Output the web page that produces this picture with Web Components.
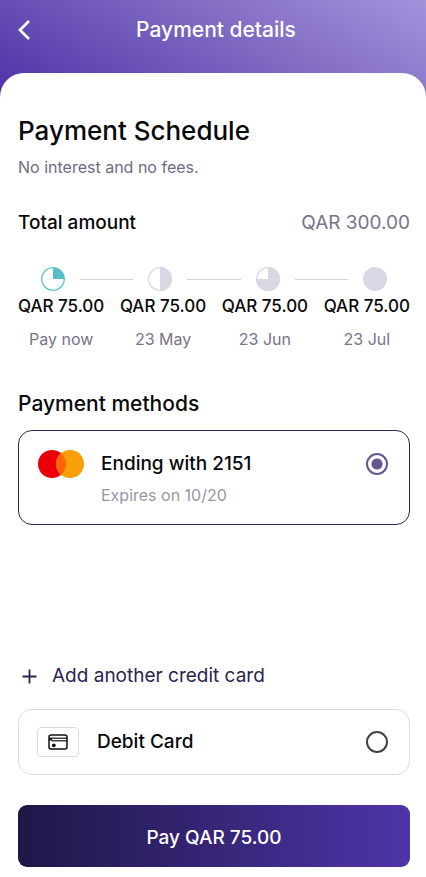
<!DOCTYPE html>
<html lang="en">
<head>
<meta charset="utf-8">
<meta name="viewport" content="width=device-width, initial-scale=1">
<title>Payment details</title>
<style>
  html { height: 100%; }
  body { margin: 0; min-height: 100%; display: flex; background: #fff; font-family: Inter, "Liberation Sans", sans-serif; font-weight: 400; color: #09090b; }
</style>
</head>
<body>
<payment-page></payment-page>

<template id="app-header">
  <style>
    :host { display: grid; grid-template-columns: 48px 1fr 42px; align-items: center; height: 59px; color: #fff; }
    button { display: flex; justify-content: center; align-items: center; height: 48px; padding: 0; border: 0; background: none; color: inherit; }
    h1 { margin: 0; text-align: center; font-size: 21px; line-height: 28px; font-weight: 500; }
  </style>
  <button type="button" aria-label="Back">
    <svg width="14" height="22" viewBox="0 0 14 22" fill="none" stroke="currentColor" stroke-width="2.7"><path d="M12 2 3 11 12 20"/></svg>
  </button>
  <h1><slot></slot></h1>
</template>

<template id="payment-schedule">
  <style>
    :host { display: block; }
    h2 { margin: 0; font-size: 26px; line-height: 32px; font-weight: 500; }
    p { margin: 0; }
    .note { margin-top: 8px; font-size: 16px; line-height: 24px; color: #6f6b83; }
    .total { display: flex; justify-content: space-between; align-items: center; margin-top: 30px; font-size: 19px; line-height: 28px; }
    .total span { font-weight: 500; }
    .total b { font-weight: 400; color: #77738a; }
    .track { display: flex; align-items: center; gap: 15px; margin: 30px 23px 0; }
    .track svg { flex: none; }
    .track i { flex: 1; height: 1px; background: #d3d2d8; }
    ol { display: flex; justify-content: space-between; list-style: none; margin: 0; padding: 3px 0 0; }
  </style>
  <h2>Payment Schedule</h2>
  <p class="note">No interest and no fees.</p>
  <p class="total"><span>Total amount</span><b>QAR 300.00</b></p>
  <div class="track" aria-hidden="true">
    <svg width="24" height="24" viewBox="0 0 24 24"><circle cx="12" cy="12" r="11.3" fill="none" stroke="#62c1ca" stroke-width="1.3"/><path d="M12 12V.7A11.3 11.3 0 0 1 23.3 12Z" fill="#55bdc7"/></svg>
    <i></i>
    <svg width="24" height="24" viewBox="0 0 24 24"><circle cx="12" cy="12" r="11.3" fill="none" stroke="#d9d7e4" stroke-width="1.3"/><path d="M12 0a12 12 0 0 1 0 24Z" fill="#d9d7e4"/></svg>
    <i></i>
    <svg width="24" height="24" viewBox="0 0 24 24"><circle cx="12" cy="12" r="11.3" fill="none" stroke="#d9d7e4" stroke-width="1.3"/><path d="M12 0a12 12 0 1 1-12 12H12Z" fill="#d9d7e4"/></svg>
    <i></i>
    <svg width="24" height="24" viewBox="0 0 24 24"><circle cx="12" cy="12" r="12" fill="#d9d7e4"/></svg>
  </div>
  <ol>
    <li><schedule-step>QAR 75.00<span slot="date">Pay now</span></schedule-step></li>
    <li><schedule-step>QAR 75.00<span slot="date">23 May</span></schedule-step></li>
    <li><schedule-step>QAR 75.00<span slot="date">23 Jun</span></schedule-step></li>
    <li><schedule-step>QAR 75.00<span slot="date">23 Jul</span></schedule-step></li>
  </ol>
</template>

<template id="schedule-step">
  <style>
    :host { display: flex; flex-direction: column; align-items: center; gap: 9px; line-height: 24px; font-size: 16px; white-space: nowrap; }
    .amount { font-size: 17px; font-weight: 500; }
    .date { color: #77738a; }
  </style>
  <span class="amount"><slot></slot></span>
  <span class="date"><slot name="date"></slot></span>
</template>

<template id="payment-methods">
  <style>
    :host { display: flex; flex-direction: column; flex: 1; }
    h2 { margin: 0 0 12px; font-size: 21px; line-height: 28px; font-weight: 500; }
    label { display: flex; border: 1px solid #dddce0; border-radius: 14px; padding: 17px 21px 17px 18px; }
    label.card { border-color: #2b2450; align-items: flex-start; padding-top: 19px; }
    label.debit { align-items: center; }
    .text { flex: 1; display: flex; flex-direction: column; gap: 5px; font-size: 19px; line-height: 28px; font-weight: 500; }
    .card .text { margin-left: 17px; }
    .debit .text { margin-left: 18px; }
    small { font-size: 16px; line-height: 24px; font-weight: 400; color: #9896a5; }
    .brand { margin-left: 1px; }
    .badge { display: flex; align-items: center; justify-content: center; box-sizing: border-box; width: 42px; height: 30px; border: 1px solid #dddce0; border-radius: 4px; }
    input { appearance: none; box-sizing: border-box; flex: none; width: 22px; height: 22px; margin: 3px 0; border: 2px solid #444247; border-radius: 50%; }
    input:checked { border-color: #68548f; background: radial-gradient(circle, #68548f 5px, transparent 6px); }
    .add { display: flex; align-items: center; align-self: flex-start; gap: 15px; margin: auto 0 19px; padding: 0 4px; border: 0; background: none; font: inherit; font-size: 19px; line-height: 28px; color: #2b2450; }
  </style>
  <h2>Payment methods</h2>
  <label class="card">
    <svg class="brand" width="46" height="28" viewBox="0 0 46 28" aria-hidden="true"><circle cx="14" cy="14" r="14" fill="#eb0008"/><circle cx="32" cy="14" r="14" fill="#f99f08"/><path d="M23 3.28a14 14 0 0 1 0 21.44a14 14 0 0 1 0-21.44Z" fill="#ff6208"/></svg>
    <span class="text"><span>Ending with 2151</span><small>Expires on 10/20</small></span>
    <input type="radio" name="method" value="card" checked>
  </label>
  <button class="add" type="button">
    <svg width="15" height="15" viewBox="0 0 15 15" fill="none" stroke="currentColor" stroke-width="1.8" aria-hidden="true"><path d="M7.5 0.5V14.5M0.5 7.5H14.5"/></svg>
    Add another credit card
  </button>
  <label class="debit">
    <span class="badge"><svg width="20" height="16" viewBox="0 0 20 16" fill="none" stroke="#111" stroke-width="1.5" aria-hidden="true"><rect x="1" y="1" width="18" height="14" rx="2"/><path d="M1 4.2H19" stroke-width="1.2"/><path d="M3.5 6.8H19" stroke-width="1.2"/><path d="M1 5.5H4" stroke-width="2"/><circle cx="5.8" cy="11.3" r="1.9" fill="#111" stroke="none"/></svg></span>
    <span class="text">Debit Card</span>
    <input type="radio" name="method" value="debit">
  </label>
</template>

<template id="pay-button">
  <style>
    :host { display: block; }
    button { display: block; width: 100%; height: 62px; padding: 3px 0 0; border: 0; border-radius: 9px; background: linear-gradient(90deg, #1f1746, #4e34a8); color: #fff; font: inherit; font-size: 19px; line-height: 28px; font-weight: 500; }
  </style>
  <button type="button"><slot></slot></button>
</template>

<template id="payment-page">
  <style>
    :host { display: flex; flex-direction: column; flex: 1; box-sizing: border-box; min-height: 100%; background: linear-gradient(30deg, #4c31a6, #8771c6 65%, #a293dc) top / 100% 100px no-repeat; }
    main { display: flex; flex-direction: column; flex: 1; margin-top: 14px; padding: 42px 16px 10px 18px; border-radius: 24px 24px 0 0; background: #fff; }
    payment-methods { margin-top: 39px; }
    pay-button { margin-top: 30px; }
  </style>
  <app-header>Payment details</app-header>
  <main>
    <payment-schedule></payment-schedule>
    <payment-methods></payment-methods>
    <pay-button>Pay QAR 75.00</pay-button>
  </main>
</template>

<script>
  for (const name of ["app-header", "schedule-step", "payment-schedule", "payment-methods", "pay-button", "payment-page"]) {
    customElements.define(name, class extends HTMLElement {
      constructor() {
        super();
        this.attachShadow({ mode: "open" }).append(document.getElementById(name).content.cloneNode(true));
      }
    });
  }
</script>
</body>
</html>
